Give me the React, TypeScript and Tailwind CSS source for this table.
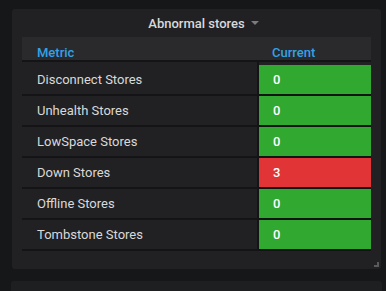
import React from "react";

const rows: { name: string; value: string; bad?: boolean }[] = [
  { name: "Disconnect Stores", value: "0" },
  { name: "Unhealth Stores", value: "0" },
  { name: "LowSpace Stores", value: "0" },
  { name: "Down Stores", value: "3", bad: true },
  { name: "Offline Stores", value: "0" },
  { name: "Tombstone Stores", value: "0" },
];

export default function App() {
  return (
    <div
      className="w-[386px] h-[291px] overflow-hidden bg-[#161719] pt-[9px] flex flex-col"
      style={{ fontFamily: "Roboto, 'Liberation Sans', sans-serif" }}
    >
      <div className="ml-[12px] w-[369px] h-[267px] bg-[#212124] rounded-[3px] relative flex flex-col">
        <div className="h-[28px] flex items-center justify-center">
          <div className="relative text-[13px] font-medium text-[#d8d9da] leading-none">
            Abnormal stores
            <span className="absolute left-[calc(100%+6px)] top-[4px] w-0 h-0 border-l-[4px] border-r-[4px] border-t-[4px] border-l-transparent border-r-transparent border-t-[#7b7b7e]" />
          </div>
        </div>
        <div className="ml-[10px] w-[349px] flex flex-col">
          <div className="h-[23px] bg-[#2a2a2d] flex items-center pt-[7px] text-[13px] leading-[15px] font-medium text-[#33a2e5]">
            <div className="w-[237px] pl-[15px]">Metric</div>
            <div className="pl-[13px]">Current</div>
          </div>
          <div className="h-[2px] bg-[#141416]" />
          <div className="h-[3px] flex">
            <div className="w-[237px] border-r-2 border-[#141416]" />
          </div>
          {rows.map((r) => (
            <div key={r.name} className="flex h-[31px] border-b-2 border-[#141416]">
              <div className="w-[237px] border-r-2 border-[#141416] pl-[15px] flex items-center text-[13px] text-[#d8d9da]">
                <span>{r.name}</span>
              </div>
              <div
                className={
                  "flex-1 flex items-center pl-[14px] text-[13px] font-medium text-white " +
                  (r.bad ? "bg-[#e13436]" : "bg-[#31a82f]")
                }
              >
                {r.value}
              </div>
            </div>
          ))}
        </div>
        <div className="absolute right-[2px] bottom-[2px] w-[5px] h-[5px] border-r-2 border-b-2 border-[#5a5a5e]" />
      </div>
      <div className="ml-[11px] mt-[12px] w-[371px] h-[10px] bg-[#1e1f21] rounded-t-[3px]" />
    </div>
  );
}
